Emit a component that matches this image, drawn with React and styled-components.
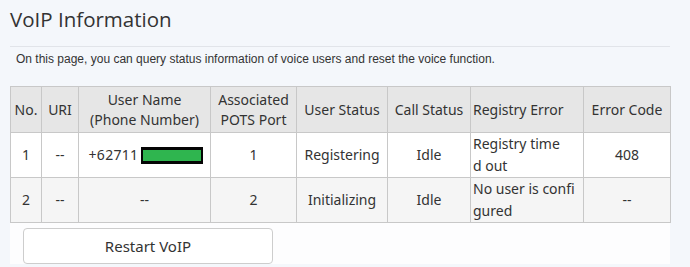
import { createGlobalStyle, styled } from 'styled-components';

const GlobalStyle = createGlobalStyle`
  html, body {
    margin: 0;
    padding: 0;
    background-color: #f4f7fb;
  }
`;

const Page = styled.div`
  width: 660px;
  padding: 4px 0 0 10px;
`;

const Title = styled.h1`
  margin: 0;
  height: 42px;
  line-height: 30px;
  font-family: "Open Sans", "Noto Sans", sans-serif;
  font-weight: 400;
  font-size: 20.5px;
  color: #333;
  border-bottom: 1px solid #e1e4e9;
`;

const Desc = styled.p`
  margin: 0;
  padding: 5px 0 0 6px;
  height: 39px;
  box-sizing: border-box;
  font-family: "Liberation Sans", Arial, sans-serif;
  font-size: 12px;
  color: #333;
`;

const Table = styled.table`
  border-collapse: collapse;
  table-layout: fixed;
  width: 660px;
  font-family: "Noto Sans", sans-serif;
  font-size: 14px;
  color: #333;
`;

const HeadCell = styled.th`
  background-color: #e6e6e6;
  border: 1px solid #c8c8c8;
  font-weight: 400;
  height: 45px;
  padding: 0 0 0 ${p => (p.$left ? '2px' : '0')};
  line-height: 20px;
  text-align: ${p => (p.$left ? 'left' : 'center')};
`;

const Row = styled.tr`
  background-color: ${p => (p.$alt ? '#f5f5f5' : '#ffffff')};
`;

const Cell = styled.td`
  border: 1px solid #c8c8c8;
  height: ${p => p.$h || 44}px;
  padding: 0 0 0 ${p => (p.$left ? '2px' : '0')};
  line-height: 22px;
  text-align: ${p => (p.$left ? 'left' : 'center')};
`;

const Phone = styled.span`
  display: inline-flex;
  align-items: center;
  margin-left: 3px;
  letter-spacing: 0.3px;
`;

const Redact = styled.span`
  display: inline-block;
  width: 58px;
  height: 11px;
  background-color: #2fb54f;
  border-style: solid;
  border-color: #050505;
  border-width: 3px 2px 3px 2px;
  margin-left: 3px;
`;

const Actions = styled.div`
  background-color: #fdfdfe;
  height: 41px;
  padding: 5px 0 0 13px;
  box-sizing: border-box;
`;

const Button = styled.button`
  width: 250px;
  height: 36px;
  background-color: #fff;
  border: 1px solid #cdcdcd;
  border-radius: 4px;
  font-family: "Noto Sans", sans-serif;
  font-size: 15px;
  color: #333;
  cursor: pointer;
`;

const widths = [31, 37, 132, 86, 91, 83, 113, 87];

export default function App() {
  return (
    <>
      <GlobalStyle />
      <Page>
        <Title>VoIP Information</Title>
        <Desc>On this page, you can query status information of voice users and reset the voice function.</Desc>
        <Table>
          <colgroup>
            {widths.map((w, i) => <col key={i} style={{ width: w }} />)}
          </colgroup>
          <thead>
            <tr>
              <HeadCell>No.</HeadCell>
              <HeadCell>URI</HeadCell>
              <HeadCell>User Name<br />(Phone Number)</HeadCell>
              <HeadCell>Associated<br />POTS Port</HeadCell>
              <HeadCell>User Status</HeadCell>
              <HeadCell>Call Status</HeadCell>
              <HeadCell $left>Registry Error</HeadCell>
              <HeadCell>Error Code</HeadCell>
            </tr>
          </thead>
          <tbody>
            <Row>
              <Cell>1</Cell>
              <Cell>--</Cell>
              <Cell><Phone>+62711<Redact /></Phone></Cell>
              <Cell>1</Cell>
              <Cell>Registering</Cell>
              <Cell>Idle</Cell>
              <Cell $left>Registry time<br />d out</Cell>
              <Cell>408</Cell>
            </Row>
            <Row $alt>
              <Cell $h={43}>2</Cell>
              <Cell>--</Cell>
              <Cell>--</Cell>
              <Cell>2</Cell>
              <Cell>Initializing</Cell>
              <Cell>Idle</Cell>
              <Cell $left>No user is confi<br />gured</Cell>
              <Cell>--</Cell>
            </Row>
          </tbody>
        </Table>
        <Actions>
          <Button>Restart VoIP</Button>
        </Actions>
      </Page>
    </>
  );
}
